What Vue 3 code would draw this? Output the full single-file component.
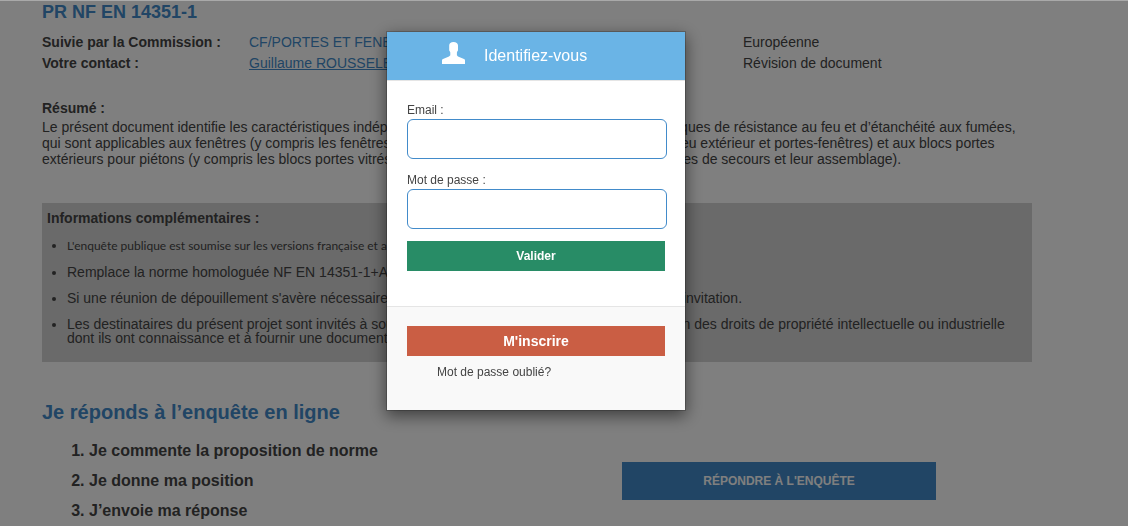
<template>
  <div class="page">
    <main class="content">
      <h1 class="title">PR NF EN 14351-1</h1>

      <dl class="meta">
        <dt>Suivie par la Commission :</dt>
        <dd><a href="#" class="plain-link">CF/PORTES ET FENETRES</a></dd>
        <dt>Origine :</dt>
        <dd>Européenne</dd>
        <dt>Votre contact :</dt>
        <dd><a href="#" class="contact-link">Guillaume ROUSSELET</a></dd>
        <dt>Motif :</dt>
        <dd>Révision de document</dd>
      </dl>

      <h2 class="label-heading">Résumé :</h2>
      <p class="summary">
        Le présent document identifie les caractéristiques indépendantes des matériaux, hormis les caractéristiques de résistance au feu et d’étanchéité aux fumées, qui sont applicables aux fenêtres (y compris les fenêtres de toit, ou les fenêtres de toit à résistance au feu extérieur et portes-fenêtres) et aux blocs portes extérieurs pour piétons (y compris les blocs portes vitrés de toute hauteur ou des blocs portes pour issues de secours et leur assemblage).
      </p>

      <section class="infos">
        <h2 class="label-heading">Informations complémentaires :</h2>
        <ul class="infos-list">
          <li v-for="info in infos" :key="info.text" :class="{ small: info.small }">
            {{ info.text }}
          </li>
        </ul>
      </section>

      <section class="answer">
        <div>
          <h2 class="answer-title">Je réponds à l’enquête en ligne</h2>
          <ol class="steps">
            <li v-for="step in steps" :key="step">{{ step }}</li>
          </ol>
        </div>
        <button type="button" class="answer-button">RÉPONDRE À L'ENQUÊTE</button>
      </section>
    </main>

    <div class="backdrop">
      <div class="modal" role="dialog" aria-modal="true" aria-labelledby="login-title">
        <header class="modal-header">
          <svg class="user-icon" width="23" height="22" viewBox="0 0 23 22" fill="currentColor" aria-hidden="true">
            <path d="M11.5 0C8.8 0 7.2 1.2 7.2 3.6V8.2C7.2 9 8.3 9.6 8.3 10.6V13.2L7 14.4L1 17C0.3 17.4 0 17.8 0 18.4V22H23V18.4C23 17.8 22.7 17.4 22 17L16 14.4L14.9 13.2V10.6C14.9 9.6 16 9 16 8.2V3.6C16 1.2 14.2 0 11.5 0Z" />
          </svg>
          <h2 id="login-title" class="modal-title">Identifiez-vous</h2>
        </header>

        <form class="modal-body" @submit.prevent="handleSubmit">
          <label for="email">Email :</label>
          <input id="email" v-model="email" type="email" class="field" />
          <label for="password">Mot de passe :</label>
          <input id="password" v-model="password" type="password" class="field" />
          <button type="submit" class="button submit-button">Valider</button>
        </form>

        <footer class="modal-footer">
          <button type="button" class="button register-button">M'inscrire</button>
          <a href="#" class="forgot-link">Mot de passe oublié?</a>
        </footer>
      </div>
    </div>
  </div>
</template>

<script setup>
import { ref } from 'vue'

const emit = defineEmits(['login'])

const email = ref('')
const password = ref('')

const infos = [
  { text: "L'enquête publique est soumise sur les versions française et anglaise.", small: true },
  { text: 'Remplace la norme homologuée NF EN 14351-1+A2 de novembre 2016.' },
  { text: "Si une réunion de dépouillement s'avère nécessaire, les commentateurs concernés recevront cette invitation." },
  { text: 'Les destinataires du présent projet sont invités à soumettre, avec leurs observations, une notification des droits de propriété intellectuelle ou industrielle dont ils ont connaissance et à fournir une documentation explicative.' }
]

const steps = [
  'Je commente la proposition de norme',
  'Je donne ma position',
  'J’envoie ma réponse'
]

const handleSubmit = () => {
  emit('login', { email: email.value, password: password.value })
}
</script>

<style>
body {
  margin: 0;
  background: white;
}
</style>

<style scoped>
.page {
  height: 100vh;
  overflow: hidden;
  font-family: "Liberation Sans", Arial, sans-serif;
  font-size: 14px;
  color: #444;
}

.content {
  padding: 2px 96px 0 42px;
}

h1,
h2,
p,
dl,
dd,
ul,
ol {
  margin: 0;
  padding: 0;
}

button {
  border: none;
  font-family: inherit;
  font-weight: bold;
  color: white;
  cursor: pointer;
}

.title {
  font-size: 18px;
  line-height: 20px;
  color: #428bca;
}

.meta {
  display: grid;
  grid-template-columns: 207fr 287fr 207fr 289fr;
  margin-top: 10px;
  line-height: 21px;
}

.meta dt {
  font-weight: bold;
}

.meta dd {
  white-space: nowrap;
}

.plain-link,
.contact-link {
  color: #428bca;
}

.plain-link {
  text-decoration: none;
}

.label-heading {
  font-size: 14px;
  line-height: 20px;
}

.meta + .label-heading {
  margin-top: 24px;
}

.summary {
  margin-top: 1px;
  line-height: 16px;
}

.infos {
  margin-top: 36px;
  padding: 5px 5px 17px;
  background: #d4d4d4;
}

.infos-list {
  display: grid;
  gap: 12px;
  margin-top: 11px;
  padding-left: 20px;
  line-height: 14px;
}

.small {
  font-family: Lato, "Noto Sans", sans-serif;
  font-size: 12px;
}

.answer {
  display: grid;
  grid-template-columns: 580fr 314fr 96fr;
  align-items: end;
  margin-top: 38px;
}

.answer-title {
  font-size: 20px;
  line-height: 24px;
  color: #428bca;
}

.steps {
  margin-top: 12px;
  padding-left: 47px;
  font-size: 16px;
  font-weight: bold;
  line-height: 30px;
}

.answer-button {
  height: 38px;
  margin-bottom: 26px;
  background: #428bca;
  font-size: 12px;
}

.backdrop {
  position: fixed;
  inset: 0;
  display: flex;
  justify-content: center;
  align-items: flex-start;
  box-sizing: border-box;
  padding: 30px 56px 0 0;
  border-top: 1px solid #a9a9a9;
  background: rgba(0, 0, 0, 0.5);
}

.modal {
  width: 298px;
  border: 1px solid rgba(0, 0, 0, 0.2);
  background: white;
  background-clip: padding-box;
  box-shadow: 0 5px 15px rgba(0, 0, 0, 0.5);
  font-size: 12px;
  line-height: 18px;
}

.modal-header {
  display: flex;
  gap: 19px;
  padding: 10px 20px 14px 55px;
  border-bottom: 1px solid #e5e5e5;
  background: #6ab4e6;
  color: white;
}

.modal-title {
  font-size: 16px;
  font-weight: normal;
  line-height: 24px;
  padding-top: 2px;
  margin-bottom: -2px;
}

.modal-body {
  display: flex;
  flex-direction: column;
  padding: 20px 20px 35px;
}

.field {
  box-sizing: border-box;
  width: 260px;
  height: 40px;
  margin-bottom: 12px;
  padding: 6px 12px;
  border: 1px solid #428bca;
  border-radius: 6px;
  outline: none;
  font-size: 14px;
}

.button {
  width: 100%;
  height: 30px;
}

.submit-button {
  background: #288c66;
  font-size: 12px;
}

.modal-footer {
  padding: 19px 20px 29px;
  border-top: 1px solid #e5e5e5;
  background: #f9f9f9;
}

.register-button {
  background: #ca5e44;
  font-size: 14px;
}

.forgot-link {
  display: block;
  margin-top: 7px;
  padding-left: 30px;
  color: #444;
  text-decoration: none;
}
</style>
